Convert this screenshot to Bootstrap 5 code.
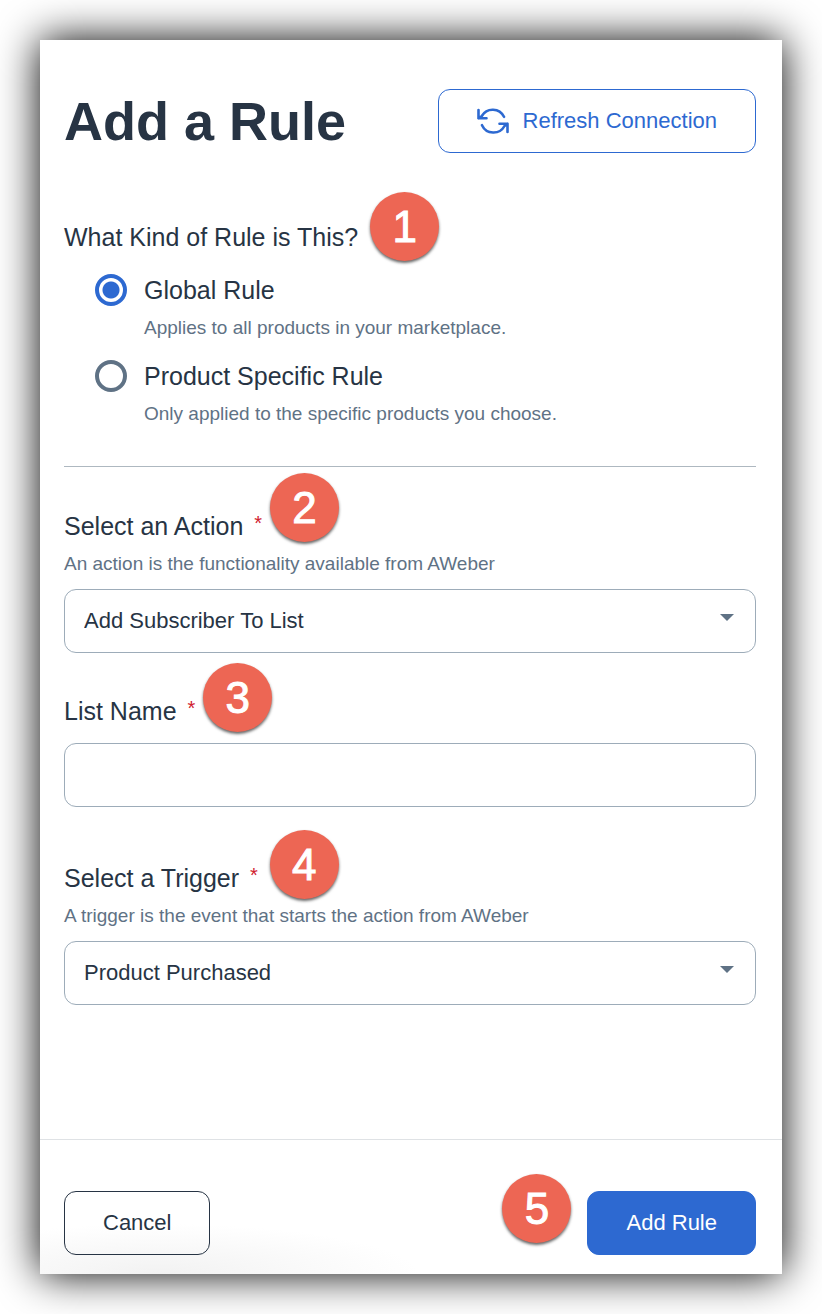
<!DOCTYPE html>
<html lang="en">
<head>
<meta charset="utf-8">
<meta name="viewport" content="width=device-width, initial-scale=1">
<title>Add a Rule</title>
<link href="https://cdn.jsdelivr.net/npm/bootstrap@5.3.0/dist/css/bootstrap.min.css" rel="stylesheet">
<style>
  :root { --ink: #273444; --muted-ink: #5f7285; --line: #9dacb9; --brand: #2d69d1; --pin: #ed6654; }
  body { font-family: "Liberation Sans", Arial, sans-serif; color: var(--ink); padding: 40px; background: #fff; }
  .rule-panel { min-height: calc(100vh - 80px); background: #fff; box-shadow: 0 0 40px #000; }
  .rule-body, .rule-foot { padding-left: 24px; padding-right: 26px; }
  .rule-head { padding-top: 49px; margin-bottom: 68px; }
  .rule-title { font-size: 54px; line-height: 64px; font-weight: 700; }
  .rule-btn { height: 64px; padding: 0 38px; font-size: 22px; line-height: 32px; border-radius: 12px; }
  .btn-refresh { --bs-btn-color: var(--brand); --bs-btn-border-color: var(--brand); --bs-btn-hover-bg: var(--brand); --bs-btn-hover-color: #fff; gap: 14px; }
  .btn-cancel { --bs-btn-color: var(--ink); --bs-btn-border-color: var(--ink); --bs-btn-hover-bg: var(--ink); --bs-btn-hover-color: #fff; }
  .btn-add { --bs-btn-color: #fff; --bs-btn-bg: var(--brand); --bs-btn-border-color: var(--brand); --bs-btn-hover-bg: #2458b3; --bs-btn-hover-color: #fff; }
  .field-title { font-size: 25px; line-height: 32px; font-weight: 400; margin: 0; }
  .field-help { font-size: 19px; line-height: 24px; color: var(--muted-ink); margin: 10px 0 0; }
  .star { color: #d0202e; font-size: 20px; line-height: 20px; vertical-align: 5px; margin-left: 4px; }
  .kinds { padding-left: 31px; padding-top: 21px; gap: 20px; }
  .kind { gap: 17px; }
  .kind .form-check-input { width: 32px; height: 32px; margin: 0; border: 4px solid var(--muted-ink); background-color: #fff; flex: none; }
  .kind .form-check-input:checked { border-color: var(--brand); background-image: radial-gradient(circle, var(--brand) 8px, #fff 9px); background-size: 32px 32px; }
  .split { margin: 40px 0 43px; border-top: 1px solid #aeb8c0; opacity: 1; }
  .rule-control { height: 64px; padding: 0 19px; font-size: 22px; line-height: 32px; color: var(--ink); border: 1px solid var(--line); border-radius: 12px; }
  .form-select.rule-control { padding-right: 56px; background-image: url("data:image/svg+xml,%3Csvg xmlns='http://www.w3.org/2000/svg' viewBox='0 0 14 14'%3E%3Cpath d='M0 0h14L7 7z' fill='%235f7285'/%3E%3C/svg%3E"); background-size: 14px 14px; background-position: right 21px center; }
  .after-help { margin-top: 13px; }
  .after-title { margin-top: 16px; }
  .field-a { margin-bottom: 42px; }
  .field-b { margin-bottom: 55px; }
  .pin { width: 69px; height: 69px; border-radius: 50%; background: var(--pin); color: #fff; font-size: 44px; line-height: 69px; text-align: center; -webkit-text-stroke: 1px #fff; box-shadow: 0 2px 3px rgba(0,0,0,.6); }
  .pin-label { position: absolute; left: 100%; bottom: -8px; margin-left: 12px; }
  .pin-raised { bottom: -5px; }
  .pin-high { bottom: 0; }
  .rule-foot { border-top: 1px solid #dfe2e5; padding-top: 51px; padding-bottom: 19px; background: radial-gradient(ellipse 260px 50px at 16% 100%, #f2f2f2, #fff); }
  .foot-pin { margin: -17px 16px 0 0; }
</style>
</head>
<body>
<main>
  <form class="rule-panel d-flex flex-column">
    <div class="rule-body flex-grow-1">
      <header class="rule-head d-flex flex-wrap justify-content-between align-items-center gap-3">
        <h1 class="rule-title m-0">Add a Rule</h1>
        <button type="button" class="btn rule-btn btn-refresh d-flex align-items-center">
          <svg class="flex-shrink-0" width="32" height="28" viewBox="0 0 32 28" fill="none" stroke="currentColor" stroke-width="2.600" stroke-linecap="round" stroke-linejoin="round" aria-hidden="true"><path d="M1.500 3V11.300H9.500M1.500 11.300L4.800 9A12.600 12.600 0 0 1 27 9.800M30.500 25V16.700H22.500M30.500 16.700L27.500 19A12.600 12.600 0 0 1 5 18.200"/></svg>
          Refresh Connection
        </button>
      </header>

      <fieldset>
        <legend class="field-title float-none"><span class="d-inline-block position-relative">What Kind of Rule is This?<span class="pin pin-label">1</span></span></legend>
        <div class="kinds d-flex flex-column">
          <div class="kind d-flex align-items-start">
            <input class="form-check-input" type="radio" name="kind" id="kind-global" aria-describedby="help-global" checked>
            <div>
              <label class="field-title d-block" for="kind-global">Global Rule</label>
              <p class="field-help" id="help-global">Applies to all products in your marketplace.</p>
            </div>
          </div>
          <div class="kind d-flex align-items-start">
            <input class="form-check-input" type="radio" name="kind" id="kind-product" aria-describedby="help-product">
            <div>
              <label class="field-title d-block" for="kind-product">Product Specific Rule</label>
              <p class="field-help" id="help-product">Only applied to the specific products you choose.</p>
            </div>
          </div>
        </div>
      </fieldset>

      <hr class="split">

      <div class="field-a">
        <div class="d-flex"><label class="field-title position-relative" for="action">Select an Action <span class="star">*</span><span class="pin pin-label pin-high ms-2">2</span></label></div>
        <p class="field-help" id="help-action">An action is the functionality available from AWeber</p>
        <select class="form-select rule-control after-help" id="action" aria-describedby="help-action"><option>Add Subscriber To List</option></select>
      </div>

      <div class="field-b">
        <div class="d-flex"><label class="field-title position-relative" for="list-name">List Name <span class="star">*</span><span class="pin pin-label pin-raised ms-2">3</span></label></div>
        <input type="text" class="form-control rule-control after-title" id="list-name">
      </div>

      <div class="field-a">
        <div class="d-flex"><label class="field-title position-relative" for="trigger">Select a Trigger <span class="star">*</span><span class="pin pin-label pin-raised">4</span></label></div>
        <p class="field-help" id="help-trigger">A trigger is the event that starts the action from AWeber</p>
        <select class="form-select rule-control after-help" id="trigger" aria-describedby="help-trigger"><option>Product Purchased</option></select>
      </div>
    </div>

    <footer class="rule-foot d-flex align-items-start">
      <button type="button" class="btn rule-btn btn-cancel me-auto">Cancel</button>
      <span class="pin foot-pin">5</span>
      <button type="submit" class="btn rule-btn btn-add">Add Rule</button>
    </footer>
  </form>
</main>
<script src="https://cdn.jsdelivr.net/npm/bootstrap@5.3.0/dist/js/bootstrap.bundle.min.js"></script>
</body>
</html>
